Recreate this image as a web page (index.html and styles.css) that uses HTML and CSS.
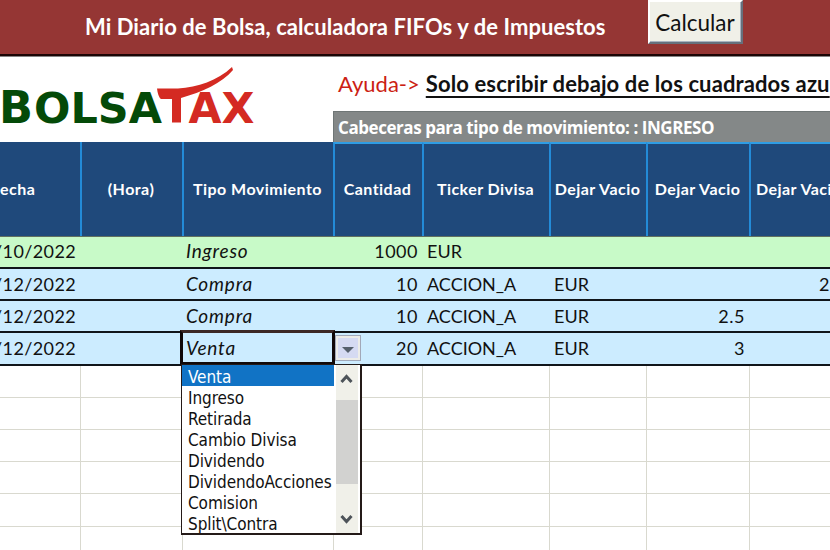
FILE: index.html
```html
<!DOCTYPE html>
<html lang="es">
<head>
<meta charset="utf-8">
<title>BolsaTax</title>
<link rel="stylesheet" href="styles.css">
</head>
<body>
<header class="banner">
  <h1 class="title"><span>Mi Diario de Bolsa, calculadora FIFOs y de Impuestos</span></h1>
  <button class="calc"><span>Calcular</span></button>
</header>
<section class="intro">
  <svg class="logo" width="333" height="85" viewBox="0 57 333 85">
    <g font-family="DejaVu Sans" font-weight="bold">
      <g fill="#044a08">
        <text x="-1" y="122.500" font-size="45" textLength="34" lengthAdjust="spacingAndGlyphs">B</text>
        <text x="34" y="122.500" font-size="42.5" textLength="128" lengthAdjust="spacingAndGlyphs">OLSA</text>
      </g>
      <text x="188.500" y="122.500" font-size="42.5" fill="#d42a22" textLength="66" lengthAdjust="spacingAndGlyphs">AX</text>
    </g>
    <path fill="#d42a22" d="M157 88.500H178C198 87 217 81 232 67L233 70C222 83 202 92 181 98V122.500H172V99H161Q158 97 157 88.500Z"/>
  </svg>
  <div class="notes">
    <p class="help"><span class="ayuda">Ayuda-&gt;</span><span class="solo">Solo escribir debajo de los cuadrados azu</span></p>
    <p class="cab"><span>Cabeceras para tipo de movimiento: : INGRESO</span></p>
  </div>
</section>
<main class="sheet">
  <div class="row head">
    <div class="first"><span>echa</span></div><div><span>(Hora)</span></div><div><span>Tipo Movimiento</span></div><div class="lit"><span>Cantidad</span></div><div class="lit"><span>Ticker Divisa</span></div><div class="lit"><span>Dejar Vacio</span></div><div class="lit"><span>Dejar Vacio</span></div><div class="lit last"><span>Dejar Vaci</span></div>
  </div>
  <div class="row data green">
    <div class="date">/10/2022</div><div></div><div class="kind">Ingreso</div><div class="num">1000</div><div>EUR</div><div></div><div></div><div></div>
  </div>
  <div class="row data">
    <div class="date">/12/2022</div><div></div><div class="kind">Compra</div><div class="num">10</div><div class="tick">ACCION_A</div><div>EUR</div><div></div><div class="num cut">2</div>
  </div>
  <div class="row data">
    <div class="date">/12/2022</div><div></div><div class="kind">Compra</div><div class="num">10</div><div class="tick">ACCION_A</div><div>EUR</div><div class="num">2.5</div><div></div>
  </div>
  <div class="row data">
    <div class="date">/12/2022</div><div></div>
    <div class="kind active">Venta
      <div class="frame"></div>
      <div class="drop"><svg width="26" height="26" viewBox="0 0 26 26"><path d="M7 12H19L13 18Z" fill="#56606c"/></svg></div>
      <div class="menu">
        <ul>
          <li class="sel">Venta</li><li>Ingreso</li><li>Retirada</li><li>Cambio Divisa</li><li>Dividendo</li><li class="long">DividendoAcciones</li><li>Comision</li><li>Split\Contra</li>
        </ul>
        <div class="scroll">
          <svg width="22" height="35" viewBox="0 0 22 35"><path d="M5.500 17L10.500 11.500L15.500 17" fill="none" stroke="#4d5359" stroke-width="3"/></svg>
          <div class="thumb"></div>
          <svg width="22" height="48" viewBox="0 0 22 48"><path d="M5.500 32L10.500 37.500L15.500 32" fill="none" stroke="#4d5359" stroke-width="3"/></svg>
        </div>
      </div>
    </div>
    <div class="num">20</div><div class="tick">ACCION_A</div><div>EUR</div><div class="num">3</div><div></div>
  </div>
  <div class="row empty"><div></div><div></div><div></div><div></div><div></div><div></div><div></div><div></div></div>
  <div class="row empty"><div></div><div></div><div></div><div></div><div></div><div></div><div></div><div></div></div>
  <div class="row empty"><div></div><div></div><div></div><div></div><div></div><div></div><div></div><div></div></div>
  <div class="row empty"><div></div><div></div><div></div><div></div><div></div><div></div><div></div><div></div></div>
  <div class="row empty"><div></div><div></div><div></div><div></div><div></div><div></div><div></div><div></div></div>
  <div class="row empty"><div></div><div></div><div></div><div></div><div></div><div></div><div></div><div></div></div>
</main>
</body>
</html>
```
FILE: styles.css
```css
* { box-sizing: border-box; }
body {
  margin: 0;
  width: 830px;
  height: 550px;
  overflow: hidden;
  background: #fff;
  color: #111;
  font-family: "Open Sans", "Liberation Sans", sans-serif;
  white-space: nowrap;
}
h1, p, ul { margin: 0; padding: 0; }
.banner {
  display: flex;
  align-items: flex-start;
  height: 57px;
  background: #953634;
  border-bottom: 1px solid #858585;
  box-shadow: inset 0 -2px #1c0505;
}
.title {
  width: 648px;
  padding-left: 85px;
  font: bold 22px/53px Lato, sans-serif;
  letter-spacing: 0.06px;
  color: #fff;
}
.calc {
  width: 95px;
  height: 44px;
  padding: 0 1px 0 0;
  background: #f0f0e8;
  border: 2px solid;
  border-color: #fff #66707c #66707c #fff;
  box-shadow: inset -1px -1px #a9b3c0;
  font: 22.5px Lato, sans-serif;
  color: #111;
}
.intro { display: flex; height: 85px; }
.logo { flex: none; }
.notes { width: 497px; overflow: hidden; }
.help {
  display: flex;
  gap: 6px;
  height: 54px;
  padding-left: 5px;
  font: 22px/54px Lato, sans-serif;
}
.ayuda { color: #cc1f14; }
.solo {
  font-weight: bold;
  letter-spacing: 0.12px;
  text-decoration: underline;
  text-decoration-thickness: 2px;
  text-underline-offset: 4px;
}
.cab {
  height: 31px;
  padding-left: 4px;
  background: #848888;
  border-top: 1px solid #6f7676;
  border-left: 1px solid #6f7676;
  font: bold 17px/32px "Open Sans", sans-serif;
  letter-spacing: -0.44px;
  color: #fff;
}
.row {
  display: grid;
  grid-template-columns: 80px 102px 151px 89px 127px 97px 103px 103px;
}
.head {
  height: 94px;
  background: #1f497b;
  font: bold 16px Lato, sans-serif;
  letter-spacing: 0.45px;
  color: #fff;
}
.head div {
  display: flex;
  align-items: center;
  justify-content: center;
  padding-bottom: 2px;
  border-left: 2px solid #238bd8;
}
.head span { margin-left: -2px; }
.head .lit { border-top: 2px solid #2f9de4; padding-bottom: 4px; }
.head .first { justify-content: flex-start; border-left: 0; }
.head .first span { margin-left: 0; }
.head .last { justify-content: flex-start; padding-left: 7px; }
.data {
  height: 32.2px;
  background: #ccecff;
  border-bottom: 2px solid #10151a;
  font: 18px/30px Lato, sans-serif;
}
.data > div { padding: 0 4px 0 5px; }
.green { background: #c8fac8; border-top: 1px solid #607060; height: 33px; line-height: 28px; }
.data .num { padding-left: 0; text-align: right; letter-spacing: 0.5px; }
.data .date { margin-left: -6px; padding: 0; letter-spacing: 0.4px; }
.data .cut { padding-right: 22px; }
.data .kind { padding-left: 4px; font-style: italic; font-size: 19px; letter-spacing: 0.8px; }
.active { position: relative; }
.frame {
  position: absolute;
  left: -2px;
  top: -3px;
  width: 155px;
  height: 35px;
  border: 3px solid #100808;
  border-top-color: #3c2826;
}
.drop {
  position: absolute;
  left: 153px;
  top: 2px;
  width: 26px;
  height: 26px;
  background: #d5daf2;
  border: 1px solid #a2a8b8;
  box-shadow: inset 0 0 0 2px #ecece8;
}
.drop svg { display: block; margin: -1px; }
.menu {
  position: absolute;
  z-index: 2;
  left: -1px;
  top: 31px;
  display: flex;
  width: 181px;
  height: 171px;
  overflow: hidden;
  background: #fff;
  border: 2px solid #241a18;
  border-left-width: 1px;
  border-top-width: 1px;
  font: normal 17px/24px "DejaVu Sans Condensed", "DejaVu Sans", sans-serif;
  letter-spacing: -0.08px;
}
.menu ul { width: 154px; list-style: none; }
.menu li { padding-left: 6px; height: 21px; }
.menu .sel { width: 152px; background: #1173c5; color: #fff; }
.scroll { width: 22px; background: #f0f0e9; }
.scroll svg { display: block; }
.thumb { height: 84px; background: #d2d2d0; }
.empty { height: 32.2px; }
.empty div { border-left: 1px solid #d9d9cf; border-bottom: 1px solid #d9d9cf; }
.empty div:first-child { border-left: 0; }
```
